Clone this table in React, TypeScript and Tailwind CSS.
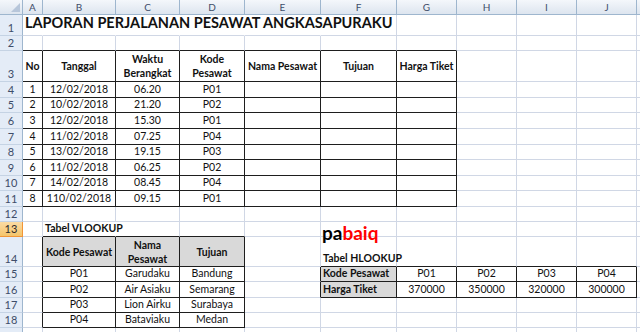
import React from "react";

const COLS = ["A", "B", "C", "D", "E", "F", "G", "H", "I", "J"];
const ROWS = Array.from({ length: 19 }, (_, i) => i + 1);

type CellDef = {
  t: React.ReactNode;
  bold?: boolean;
  align?: "c" | "l";
  v?: "c" | "b";
  gray?: boolean;
  size?: "title";
};

const C: Record<string, CellDef> = {};
const put = (r: number, c: number, d: CellDef) => {
  C[`${r}-${c}`] = d;
};

put(1, 1, { t: "LAPORAN PERJALANAN PESAWAT ANGKASAPURAKU", bold: true, align: "l", size: "title" });
const h3: React.ReactNode[] = [
  "No",
  "Tanggal",
  <>Waktu<br />Berangkat</>,
  <>Kode<br />Pesawat</>,
  "Nama Pesawat",
  "Tujuan",
  "Harga Tiket",
];
h3.forEach((t, i) => put(3, i + 1, { t, bold: true, v: "c" }));

const data = [
  ["1", "12/02/2018", "06.20", "P01"],
  ["2", "10/02/2018", "21.20", "P02"],
  ["3", "12/02/2018", "15.30", "P01"],
  ["4", "11/02/2018", "07.25", "P04"],
  ["5", "13/02/2018", "19.15", "P03"],
  ["6", "11/02/2018", "06.25", "P02"],
  ["7", "14/02/2018", "08.45", "P04"],
  ["8", "110/02/2018", "09.15", "P01"],
];
data.forEach((row, i) => row.forEach((t, j) => put(4 + i, j + 1, { t })));

put(13, 2, { t: "Tabel VLOOKUP", bold: true, align: "l" });
put(14, 2, { t: "Kode Pesawat", bold: true, v: "c", gray: true });
put(14, 3, { t: <>Nama<br />Pesawat</>, bold: true, v: "c", gray: true });
put(14, 4, { t: "Tujuan", bold: true, v: "c", gray: true });
put(14, 6, { t: "Tabel HLOOKUP", bold: true, align: "l" });

const vl = [
  ["P01", "Garudaku", "Bandung"],
  ["P02", "Air Asiaku", "Semarang"],
  ["P03", "Lion Airku", "Surabaya"],
  ["P04", "Bataviaku", "Medan"],
];
vl.forEach((row, i) => row.forEach((t, j) => put(15 + i, 2 + j, { t })));

put(15, 6, { t: "Kode Pesawat", bold: true, align: "l", gray: true });
put(16, 6, { t: "Harga Tiket", bold: true, align: "l", gray: true });
["P01", "P02", "P03", "P04"].forEach((t, i) => put(15, 7 + i, { t }));
["370000", "350000", "320000", "300000"].forEach((t, i) => put(16, 7 + i, { t }));

function rightKind(r: number, c: number): "black" | "none" | "grid" {
  if (r >= 3 && r <= 11 && c >= 1 && c <= 7) return "black";
  if (r >= 14 && r <= 18 && c >= 1 && c <= 4) return "black";
  if (r >= 15 && r <= 16 && c >= 5 && c <= 10) return "black";
  if (r === 1 && c >= 1 && c <= 5) return "none";
  if (r === 13 && c === 2) return "none";
  return "grid";
}

function bottomBlack(r: number, c: number): boolean {
  if (r >= 2 && r <= 11 && c >= 1 && c <= 7) return true;
  if (r >= 13 && r <= 18 && c >= 2 && c <= 4) return true;
  if (r >= 14 && r <= 16 && c >= 6 && c <= 10) return true;
  return false;
}

function Cell({ r, c }: { r: number; c: number }) {
  const d = C[`${r}-${c}`];
  const rk = rightKind(r, c);
  const rc =
    rk === "black"
      ? "border-r border-r-[#1e1e1e]"
      : rk === "none"
      ? "border-r border-r-transparent"
      : "border-r border-r-[#d0d7e5]";
  const bc = bottomBlack(r, c) ? "border-b border-b-[#1e1e1e]" : "border-b border-b-[#d0d7e5]";
  const bg = d?.gray ? "bg-[#d9d9d9]" : "";
  const align = d?.align === "l" ? "justify-start pl-[2px] text-left" : "justify-center text-center";
  const v = d?.v === "c" ? "items-center" : "items-end pb-[1px]";
  const size =
    d?.size === "title"
      ? "text-[14.5px] leading-[18px] pb-[2px]"
      : "text-[10.5px] leading-[14px]";
  const weight = d?.bold ? "font-bold" : "font-normal";
  return (
    <div className={`flex min-w-0 ${rc} ${bc} ${bg} ${align} ${v}`}>
      {d && (
        <span className={`whitespace-nowrap text-[#111111] ${size} ${weight}`}>{d.t}</span>
      )}
    </div>
  );
}

export default function App() {
  return (
    <div
      className="relative h-[332px] w-[640px] overflow-hidden bg-white"
      style={{ fontFamily: "Lato, 'Liberation Sans', sans-serif" }}
    >
      <div className="grid grid-cols-[23px_20px_73px_64px_65px_76px_76px_60px_60px_60px_60px_1fr] grid-rows-[15px_21px_15px_31px_16px_15px_16px_16px_15px_16px_15px_16px_15px_15px_30px_15px_16px_15px_15px_15px]">
        {/* corner */}
        <div className="relative border-r border-b border-[#9eb6ce] bg-gradient-to-b from-[#f4f7fb] to-[#dde5ef]">
          <svg className="absolute bottom-[2px] right-[2px]" width="9" height="9" viewBox="0 0 9 9">
            <polygon points="9,0 9,9 0,9" fill="#b7c6da" />
          </svg>
        </div>
        {COLS.map((l) => (
          <div
            key={l}
            className="flex items-center justify-center border-r border-b border-[#9eb6ce] bg-gradient-to-b from-[#f4f7fb] to-[#dde5ef] text-[10px] leading-none text-[#3e4d69]"
          >
            {l}
          </div>
        ))}
        <div className="border-b border-[#9eb6ce] bg-gradient-to-b from-[#f4f7fb] to-[#dde5ef]" />
        {ROWS.map((r) => (
          <React.Fragment key={r}>
            {r === 13 ? (
              <div className="flex items-end justify-center border-r border-b border-r-[#f29536] border-b-[#f29536] bg-gradient-to-b from-[#fbdba3] to-[#f5c56a] pb-[1px] text-[11px] leading-[13px] text-[#2a2a2a]">
                {r}
              </div>
            ) : (
              <div className="flex items-end justify-center border-r border-b border-r-[#9eb6ce] border-b-[#c5d3e4] bg-[#e4ecf7] pb-[1px] text-[11px] leading-[13px] text-[#3e4d69]">
                {r < 19 ? r : null}
              </div>
            )}
            {COLS.map((_, i) => (
              <Cell key={i} r={r} c={i + 1} />
            ))}
            <div className="border-b border-b-[#d0d7e5]" />
          </React.Fragment>
        ))}
      </div>
      <div className="absolute left-[322px] top-[223px] text-[19px] font-bold leading-[20px]">
        <span className="text-black">pa</span>
        <span className="text-[#ff0000]">baiq</span>
      </div>
    </div>
  );
}
